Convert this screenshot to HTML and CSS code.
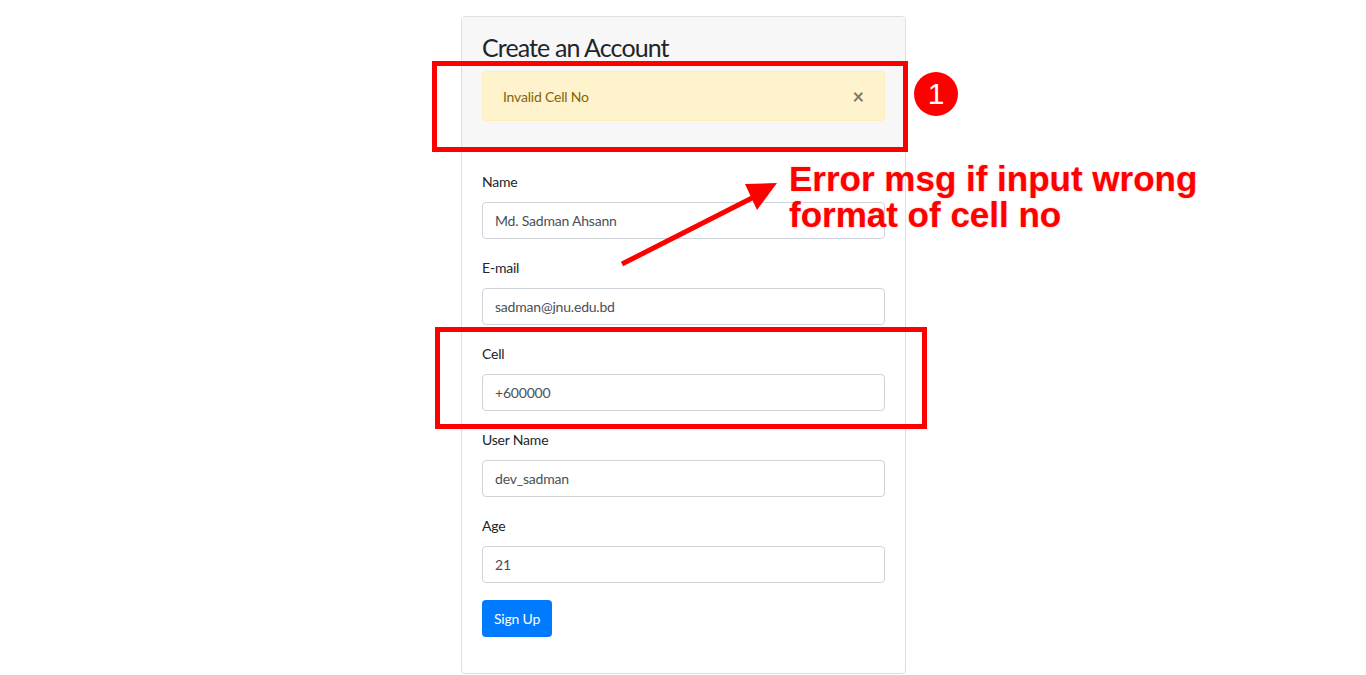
FILE: index.html
```html
<!DOCTYPE html>
<html lang="en">
<head>
<meta charset="utf-8">
<title>Create an Account</title>
<link rel="stylesheet" href="styles.css">
</head>
<body>
<div class="page">
  <div class="card">
    <div class="card-header">
      <h3 class="title">Create an Account</h3>
      <div class="alert">
        <span>Invalid Cell No</span>
        <span class="close">&times;</span>
      </div>
    </div>
    <div class="card-body">
      <form class="form">
        <div class="group">
          <label class="label">Name</label>
          <div class="input">Md. Sadman Ahsann</div>
        </div>
        <div class="group">
          <label class="label">E-mail</label>
          <div class="input">sadman@jnu.edu.bd</div>
        </div>
        <div class="group">
          <label class="label">Cell</label>
          <div class="input">+600000</div>
        </div>
        <div class="group">
          <label class="label">User Name</label>
          <div class="input">dev_sadman</div>
        </div>
        <div class="group">
          <label class="label">Age</label>
          <div class="input">21</div>
        </div>
        <div class="btn">Sign Up</div>
      </form>
    </div>
  </div>
</div>

<svg class="overlay" width="1366" height="675" viewBox="0 0 1366 675">
  <rect x="434.5" y="63.5" width="471" height="86" fill="none" stroke="#ff0000" stroke-width="5"/>
  <rect x="437.5" y="329.5" width="487" height="97" fill="none" stroke="#ff0000" stroke-width="5"/>
  <line x1="622" y1="264" x2="754" y2="197" stroke="#ff0000" stroke-width="5"/>
  <polygon points="745,184 777,183 757,210" fill="#ff0000"/>
  <circle cx="936" cy="94" r="22" fill="#ff0000"/>
</svg>
<div class="badge">1</div>
<div class="note">Error msg if input wrong<br>format of cell no</div>
</body>
</html>
```
FILE: styles.css
```css
html, body {
  margin: 0;
  padding: 0;
  background: #ffffff;
}
body {
  font-family: Lato, "Open Sans", sans-serif;
  color: #212529;
  position: relative;
  width: 1366px;
  height: 675px;
  overflow: hidden;
}
.page {
  display: flex;
  justify-content: center;
  padding-top: 16px;
  padding-left: 1px;
}
.card {
  width: 443px;
  border: 1px solid #dfdfdf;
  border-radius: 4px;
  background: #ffffff;
  overflow: hidden;
}
.card-header {
  background: #f7f7f7;
  padding: 15px 20px 31px 20px;
}
.title {
  margin: 0 0 8px 0;
  font-size: 25px;
  line-height: 31px;
  font-weight: 400;
  letter-spacing: -0.9px;
  color: #212529;
}
.alert {
  display: flex;
  justify-content: space-between;
  align-items: center;
  height: 48px;
  padding: 0 20px;
  background: #fff3cd;
  border: 1px solid #ffeeba;
  border-radius: 4px;
  color: #856404;
  font-size: 14px;
  letter-spacing: -0.2px;
}
.close {
  font-size: 20px;
  font-weight: 700;
  color: #000;
  opacity: 0.5;
  line-height: 1;
  margin-right: 0;
}
.card-body {
  padding: 18px 20px 20px 20px;
}
.form {
  display: flex;
  flex-direction: column;
}
.group {
  display: flex;
  flex-direction: column;
  margin-bottom: 17px;
}
.label {
  font-size: 14px;
  letter-spacing: -0.2px;
  line-height: 24px;
  margin-bottom: 8px;
  color: #212529;
}
.input {
  height: 35px;
  border: 1px solid #ced4da;
  border-radius: 4px;
  padding: 0 12px;
  display: flex;
  align-items: center;
  font-size: 14px;
  letter-spacing: -0.2px;
  color: #495057;
  background: #fff;
}
.btn {
  align-self: flex-start;
  width: 70px;
  height: 37px;
  box-sizing: border-box;
  border-radius: 4px;
  background: #007bff;
  color: #fff;
  font-size: 14px;
  letter-spacing: -0.2px;
  display: flex;
  align-items: center;
  justify-content: center;
  margin-bottom: 16px;
}
.overlay {
  position: absolute;
  left: 0;
  top: 0;
  pointer-events: none;
}
.badge {
  position: absolute;
  left: 914px;
  top: 72px;
  width: 44px;
  height: 44px;
  display: flex;
  align-items: center;
  justify-content: center;
  color: #fff;
  font-family: "Liberation Sans", Arial, sans-serif;
  font-size: 30px;
  line-height: 1;
}
.note {
  position: absolute;
  left: 789px;
  top: 161px;
  font-family: "Liberation Sans", Arial, sans-serif;
  font-weight: 700;
  font-size: 35px;
  line-height: 36px;
  color: #ff0000;
  text-shadow: 0 0 2px rgba(255, 120, 120, 0.6);
}
```
